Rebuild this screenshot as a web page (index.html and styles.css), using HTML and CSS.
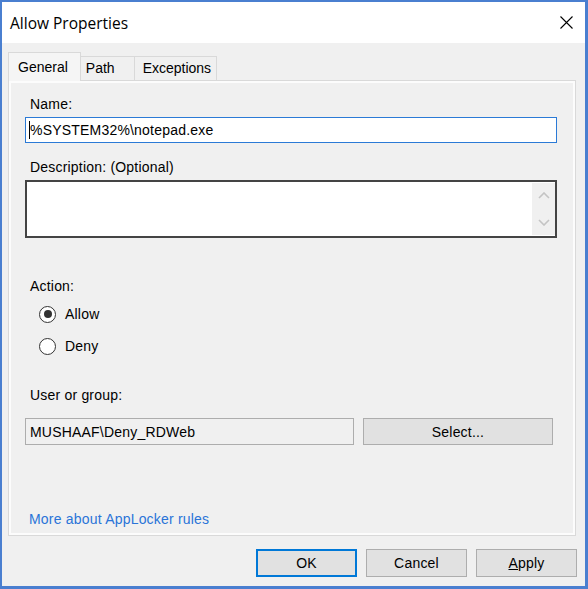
FILE: index.html
```html
<!DOCTYPE html>
<html>
<head>
<meta charset="utf-8">
<title>Allow Properties</title>
<link rel="stylesheet" href="styles.css">
</head>
<body>
<div class="window">
  <div class="titlebar">
    <span class="title">Allow Properties</span>
    <svg class="close" width="13" height="13" viewBox="0 0 13 13"><path d="M0.5 0.5 L12.5 12.5 M12.5 0.5 L0.5 12.5" stroke="#000" stroke-width="1.1" fill="none"/></svg>
  </div>
  <div class="body">
    <div class="tabs">
      <div class="tab tab-general active">General</div>
      <div class="tab tab-path">Path</div>
      <div class="tab tab-exc">Exceptions</div>
    </div>
    <div class="panel">
      <div class="label label-name">Name:</div>
      <div class="input input-name"><span class="caret"></span>%SYSTEM32%\notepad.exe</div>
      <div class="label label-desc">Description: (Optional)</div>
      <div class="textarea">
        <div class="scroll">
          <svg width="12" height="7" viewBox="0 0 12 7"><path d="M1 6 L6 1 L11 6" stroke="#c4c4c4" stroke-width="1.6" fill="none"/></svg>
          <svg width="12" height="7" viewBox="0 0 12 7"><path d="M1 1 L6 6 L11 1" stroke="#c4c4c4" stroke-width="1.6" fill="none"/></svg>
        </div>
      </div>
      <div class="label label-action">Action:</div>
      <div class="radios">
        <div class="radio"><span class="circle checked"></span><span>Allow</span></div>
        <div class="radio"><span class="circle"></span><span>Deny</span></div>
      </div>
      <div class="label label-user">User or group:</div>
      <div class="user-row">
        <div class="input input-user">MUSHAAF\Deny_RDWeb</div>
        <div class="button button-select">Select...</div>
      </div>
      <a class="link">More about AppLocker rules</a>
    </div>
    <div class="buttons">
      <div class="button button-ok">OK</div>
      <div class="button">Cancel</div>
      <div class="button"><u>A</u>pply</div>
    </div>
  </div>
</div>
</body>
</html>
```
FILE: styles.css
```css
html, body {
  margin: 0;
  padding: 0;
  background: #f0f0f0;
}
body {
  font-family: "Liberation Sans", Arial, sans-serif;
  font-size: 14px;
  letter-spacing: 0.2px;
  color: #000;
}
.window {
  width: 588px;
  height: 589px;
  box-sizing: border-box;
  border-style: solid;
  border-color: #4a7fd0;
  border-width: 2px 3px 3px 2px;
  display: flex;
  flex-direction: column;
  background: #f0f0f0;
}
.titlebar {
  height: 41px;
  flex: none;
  background: #fff;
  display: flex;
  align-items: center;
  justify-content: space-between;
  padding: 0 12px 0 8px;
}
.title {
  font-family: "Open Sans", "Liberation Sans", sans-serif;
  font-size: 15.5px;
  letter-spacing: 0;
  line-height: 20px;
  padding-top: 1px;
}
.close {
  display: block;
}
.body {
  flex: 1;
  display: flex;
  flex-direction: column;
  padding: 9px 9px 0 6px;
}
.tabs {
  display: flex;
  align-items: flex-end;
  height: 29px;
  margin-bottom: -1px;
  position: relative;
  z-index: 1;
}
.tab {
  height: 24px;
  box-sizing: border-box;
  border: 1px solid #d9d9d9;
  border-bottom: none;
  margin-bottom: 1px;
  background: #f0f0f0;
  line-height: 22px;
  white-space: nowrap;
  letter-spacing: 0;
}
.tab.active {
  height: 29px;
  margin-bottom: 0;
  background: #f5f5f5;
  line-height: 29px;
  position: relative;
  z-index: 2;
}
.tab-general {
  padding: 0 12px 0 9px;
}
.tab-path {
  padding: 0 19px 0 5px;
  margin-left: -1px;
}
.tab-exc {
  padding: 0 5px 0 8px;
  margin-left: -1px;
}
.panel {
  height: 456px;
  box-sizing: border-box;
  border: 1px solid #d9d9d9;
  box-shadow: inset 0 0 0 2px #fcfcfc;
  padding: 0 0 0 16px;
  display: flex;
  flex-direction: column;
  align-items: flex-start;
}
.label {
  line-height: 16px;
  margin-left: 5px;
}
.label-name { margin-top: 15px; }
.label-desc { margin-top: 16px; }
.label-action { margin-top: 40px; }
.label-user { margin-top: 31px; }
.input {
  box-sizing: border-box;
  display: flex;
  align-items: center;
  white-space: nowrap;
}
.input-name {
  margin-top: 5px;
  width: 532px;
  height: 26px;
  border: 1px solid #2b7ad6;
  background: #fff;
  padding-left: 3px;
}
.caret {
  display: inline-block;
  width: 1px;
  height: 18px;
  background: #000;
}
.textarea {
  margin-top: 5px;
  width: 532px;
  height: 58px;
  box-sizing: border-box;
  border: 2px solid #444;
  background: #fff;
  display: flex;
  justify-content: flex-end;
  padding: 1px 0 1px 0;
}
.scroll {
  width: 23px;
  background: #f0f0f0;
  display: flex;
  flex-direction: column;
  align-items: center;
  justify-content: space-between;
  padding: 9px 0 9px 0;
  box-sizing: border-box;
}
.scroll svg {
  display: block;
}
.radios {
  margin-top: 10px;
  margin-left: 14px;
  display: flex;
  flex-direction: column;
  gap: 12px;
}
.radio {
  height: 20px;
  display: flex;
  align-items: center;
  gap: 9px;
}
.circle {
  width: 17px;
  height: 17px;
  box-sizing: border-box;
  border: 1px solid #333;
  border-radius: 50%;
  background: #fff;
  display: flex;
  align-items: center;
  justify-content: center;
}
.circle.checked::after {
  content: "";
  width: 8px;
  height: 8px;
  border-radius: 50%;
  background: #333;
}
.user-row {
  margin-top: 15px;
  display: flex;
  gap: 9px;
}
.input-user {
  width: 329px;
  height: 27px;
  border: 1px solid #adadad;
  background: #f0f0f0;
  padding-left: 4px;
}
.button {
  box-sizing: border-box;
  height: 28px;
  width: 101px;
  border: 1px solid #adadad;
  background: #e1e1e1;
  display: flex;
  align-items: center;
  justify-content: center;
}
.button-select {
  width: 190px;
  height: 27px;
}
.button-ok {
  border: 2px solid #0078d7;
}
.link {
  margin-top: 66px;
  margin-left: 4px;
  line-height: 16px;
  color: #2a74d8;
  cursor: pointer;
}
.buttons {
  margin-top: 13px;
  display: flex;
  justify-content: flex-end;
  gap: 9px;
  margin-right: -1px;
}
```
